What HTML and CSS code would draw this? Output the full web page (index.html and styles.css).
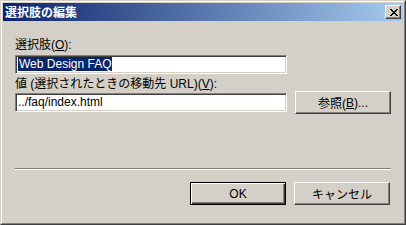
FILE: index.html
```html
<!DOCTYPE html>
<html>
<head>
<meta charset="utf-8">
<link rel="stylesheet" href="styles.css">
</head>
<body>
<div class="window">
  <div class="frame">
    <div class="titlebar">
      <span class="title">選択肢の編集</span>
      <div class="close">
        <svg width="8" height="7" viewBox="0 0 8 7" shape-rendering="crispEdges">
          <path d="M0 0h2v1h-2zM6 0h2v1h-2zM1 1h2v1h-2zM5 1h2v1h-2zM2 2h4v1h-4zM3 3h2v1h-2zM2 4h4v1h-4zM1 5h2v1h-2zM5 5h2v1h-2zM0 6h2v1h-2zM6 6h2v1h-2z" fill="#000"/>
        </svg>
      </div>
    </div>
    <div class="content">
      <div class="label">選択肢(<u>O</u>):</div>
      <div class="field field-name"><span class="sel">Web Design FAQ</span></div>
      <div class="label label-url">値 (選択されたときの移動先 URL)(<u>V</u>):</div>
      <div class="row">
        <div class="field">../faq/index.html</div>
        <div class="btn">参照(<u>B</u>)...</div>
      </div>
      <div class="sep"></div>
      <div class="actions">
        <div class="btn default">OK</div>
        <div class="btn">キャンセル</div>
      </div>
    </div>
  </div>
</div>
</body>
</html>
```

FILE: styles.css
```css
* {box-sizing: border-box;}

body {
  margin: 0;
  font-family: "Liberation Sans", "Noto Sans CJK JP", sans-serif;
  font-size: 12px;
  color: #000;
  background: #d4d0c8;
}

u {
  text-decoration: underline;
  text-underline-offset: 1px;
}

/* outer window frame, classic 3D look */
.window {
  width: 406px;
  height: 225px;
  border: 1px solid;
  border-color: #d4d0c8 #404040 #404040 #d4d0c8;
  background: #d4d0c8;
}

.frame {
  height: 100%;
  border: 1px solid;
  border-color: #fff #808080 #808080 #fff;
  padding: 1px;
  display: flex;
  flex-direction: column;
}

.titlebar {
  height: 18px;
  display: flex;
  align-items: center;
  justify-content: space-between;
  padding: 0 2px;
  background: linear-gradient(to right, #0a246a, #a6caf0);
}

.title {
  color: #fff;
  font-weight: bold;
  font-family: "Noto Sans CJK JP", sans-serif;
  line-height: 14px;
  height: 14px;
}

.close {
  width: 16px;
  height: 14px;
  display: flex;
  align-items: center;
  justify-content: center;
  background: #d4d0c8;
  border: 1px solid;
  border-color: #fff #404040 #404040 #fff;
  box-shadow: inset -1px -1px #808080;
  padding-left: 1px;
}

.content {
  padding: 17px 12px 0 12px;
  display: flex;
  flex-direction: column;
}

.label {
  height: 14px;
  line-height: 14px;
  margin-bottom: 3px;
}

.label-url {
  margin-top: 4px;
  height: 13px;
  line-height: 13px;
  margin-bottom: 0;
}

/* sunken edit box */
.field {
  height: 19px;
  background: #fff;
  border: 1px solid;
  border-color: #808080 #fff #fff #808080;
  box-shadow: inset 1px 1px #404040, inset -1px -1px #d4d0c8;
  padding: 0 2px;
  line-height: 17px;
  white-space: nowrap;
}

.field-name {
  width: 272px;
}

.sel {
  background: #0a246a;
  color: #fff;
  padding: 0 1px;
}

.row {
  display: flex;
  align-items: center;
  gap: 8px;
  height: 23px;
}

.row .field {
  flex: 1;
}

.btn {
  width: 96px;
  height: 23px;
  display: flex;
  align-items: center;
  justify-content: center;
  border: 1px solid;
  border-color: #fff #404040 #404040 #fff;
  box-shadow: inset -1px -1px #808080;
  background: #d4d0c8;
  flex-shrink: 0;
}

.btn.default {
  border-color: #000;
  box-shadow: inset 1px 1px #fff, inset -1px -1px #404040, inset -2px -2px #808080;
}

.sep {
  margin-top: 54px;
  border-top: 1px solid #808080;
  border-bottom: 1px solid #fff;
}

.actions {
  margin-top: 12px;
  display: flex;
  justify-content: flex-end;
  gap: 8px;
  padding-right: 1px;
}
```
